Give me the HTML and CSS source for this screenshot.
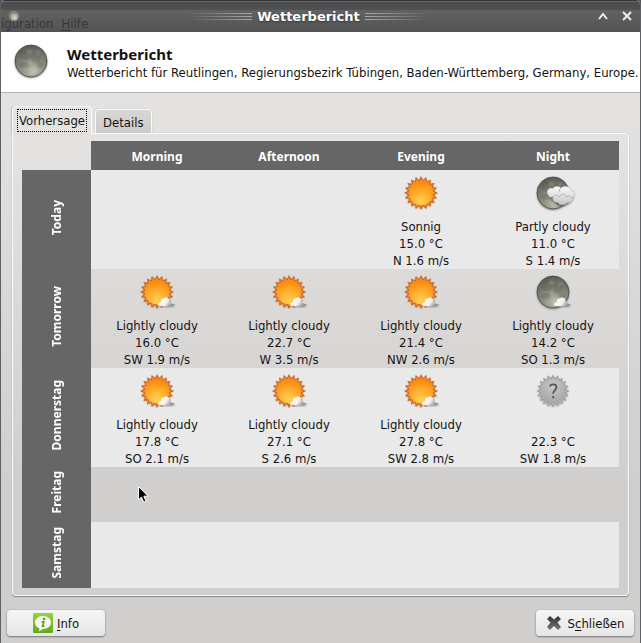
FILE: index.html
```html
<!DOCTYPE html>
<html lang="de">
<head>
<meta charset="utf-8">
<title>Wetterbericht</title>
<link rel="stylesheet" href="styles.css">
</head>
<body>
<svg class="defs" aria-hidden="true">
  <defs>
    <radialGradient id="sunFill" cx=".5" cy=".85" r=".8"><stop offset="0" stop-color="#ffd257"/><stop offset=".5" stop-color="#ffae2c"/><stop offset="1" stop-color="#fb8a10"/></radialGradient>
    <radialGradient id="moonFill" cx=".55" cy=".85" r=".9"><stop offset="0" stop-color="#bcbcae"/><stop offset=".4" stop-color="#8e8f82"/><stop offset=".75" stop-color="#6e7066"/><stop offset="1" stop-color="#50524b"/></radialGradient>
    <linearGradient id="cloudFill" x1="0" y1="0" x2="0" y2="1"><stop offset="0" stop-color="#fafafa"/><stop offset="1" stop-color="#c4c4c4"/></linearGradient>
    <linearGradient id="wispFill" x1="0" y1="0" x2="1" y2=".4"><stop offset="0" stop-color="#fff"/><stop offset=".6" stop-color="#f0f0f0"/><stop offset="1" stop-color="#888"/></linearGradient>
    <radialGradient id="greyFill" cx=".5" cy=".3" r=".7"><stop offset="0" stop-color="#c8c8c8"/><stop offset="1" stop-color="#a6a6a6"/></radialGradient>
    <filter id="soft" x="-20%" y="-20%" width="140%" height="140%"><feGaussianBlur stdDeviation="1"/></filter>
    <path id="star" d="M0-16.500 2-12.500 5.100-15.700 5.800-11.300 9.700-13.300 9-9 13.300-9.700 11.300-5.800 15.700-5.100 12.500-2 16.500 0 12.500 2 15.700 5.100 11.300 5.800 13.300 9.700 9 9 9.700 13.300 5.800 11.300 5.100 15.700 2 12.500 0 16.500-2 12.500-5.100 15.700-5.800 11.300-9.700 13.300-9 9-13.300 9.700-11.300 5.800-15.700 5.100-12.500 2-16.500 0-12.500-2-15.700-5.100-11.300-5.800-13.300-9.700-9-9-9.700-13.300-5.800-11.300-5.100-15.700-2-12.500Z"/>
  </defs>
  <symbol id="sun" viewBox="-24 -23 48 48">
    <circle r="14.5" cy="1" fill="#c86a20" opacity=".4" filter="url(#soft)"/>
    <use href="#star" fill="#c05c16" stroke="#c8641a" stroke-width=".5"/>
    <use href="#star" fill="#ee9040" transform="scale(.9)"/>
    <circle r="12.2" fill="url(#sunFill)"/>
  </symbol>
  <symbol id="moon" viewBox="-24 -23 48 48">
    <circle r="16" cy="1" fill="#333" opacity=".6" filter="url(#soft)"/>
    <circle r="16" fill="url(#moonFill)" stroke="#484a43" stroke-width=".8"/>
    <g fill="#383a34" opacity=".16"><ellipse cx="-6" cy="-6" rx="6" ry="5"/><ellipse cx="5" cy="-4" rx="5" ry="6"/><ellipse cx="-7" cy="4" rx="5" ry="3"/><circle cx="9" cy="4" r="3"/></g>
    <g fill="#d6d6c8" opacity=".25" filter="url(#soft)"><circle cx="3" cy="9" r="4"/><circle cx="-2" cy="-9" r="2"/><circle cx="-1" cy="2" r="2"/><circle cx="7" cy="-8" r="2"/></g>
  </symbol>
  <symbol id="wisp" viewBox="-24 -23 48 48">
    <path d="M2 15h16l-3-2-5-1z" fill="#444" opacity=".6" filter="url(#soft)"/>
    <path d="M1 13.500C.5 11.500 2.500 10 4 10.300 3.500 7.500 5 6 6.500 6.500 8 5 12 5 12.500 8.500 12.700 10 14 11.500 18.500 13 14 14.500 7 15 1 13.500Z" fill="url(#wispFill)"/>
  </symbol>
  <symbol id="lightSun" viewBox="-24 -23 48 48"><use href="#sun" x="-24" y="-23" width="48" height="48"/><use href="#wisp" x="-24" y="-23" width="48" height="48"/></symbol>
  <symbol id="lightMoon" viewBox="-24 -23 48 48"><use href="#moon" x="-24" y="-23" width="48" height="48"/><use href="#wisp" x="-24" y="-23" width="48" height="48"/></symbol>
  <symbol id="partMoon" viewBox="-24 -23 48 48">
    <use href="#moon" x="-24" y="-23" width="48" height="48"/>
    <path d="M-3 3C4 2 20-2 20 4 20 10 12 14 7 13 3 12-2 8-3 3Z" fill="#222" opacity=".6" filter="url(#soft)"/>
    <path d="M-5 2C-8-3-3-6 0-4.500 1-7 6-7.500 8-5 11-8 17-7 18-3 22-2 23 3 20 5 21 8 17 10.500 14.500 9.500 12 13 6 12.500 5 9.500 1 10-1 7 0 4-2 5-4 4-5 2Z" fill="url(#cloudFill)" stroke="#999" stroke-width=".5"/>
    <path d="M0 4c2-3 5-2 6 0 2-4 7-3 7 0 3-2 5 0 7 2M8-5c-2 1-2 3-1 4" fill="none" stroke="#999" stroke-width=".8" opacity=".7"/>
  </symbol>
  <symbol id="unknown" viewBox="-24 -23 48 48">
    <circle r="14.500" cy="1" fill="#777" opacity=".4" filter="url(#soft)"/>
    <use href="#star" fill="#8c8c8c"/><use href="#star" fill="#b2b2b2" transform="scale(.93)"/>
    <circle r="12.200" fill="url(#greyFill)"/>
    <path d="M-3-4.500C-2.500-7.500 3.500-7.500 3.500-3.800 3.500-1 .2-.8.200 2.800M.200 5v2.200" fill="none" stroke="#555" stroke-width="1.800"/>
  </symbol>
</svg>
<div class="window">
  <header class="titlebar">
    <div class="ghost" aria-hidden="true"><span>iguration</span><span><u>H</u>ilfe</span></div>
    <svg class="mini" viewBox="-18 -18 36 36"><circle r="16" fill="#84857b"/><circle cx="1" cy="3" r="10" fill="#b9b9aa"/><circle cx="2" cy="5" r="5" fill="#d0d0c2"/></svg>
    <span class="lines"></span><h1>Wetterbericht</h1><span class="lines right"></span>
    <div class="controls">
      <button aria-label="Einrollen"><svg viewBox="0 0 12 12"><path d="M2 9 6 4l4 5"/></svg></button>
      <button aria-label="Fenster schließen"><svg viewBox="0 0 12 12"><path d="m2 2 8 8M10 2l-8 8"/></svg></button>
    </div>
  </header>
  <section class="banner">
    <svg class="icon" viewBox="0 0 48 48"><use href="#moon"/></svg>
    <div><h2>Wetterbericht</h2><p>Wetterbericht für Reutlingen, Regierungsbezirk Tübingen, Baden-Württemberg, Germany, Europe.</p></div>
  </section>
  <main>
    <div class="tabs" role="tablist">
      <button class="tab active" role="tab" aria-selected="true"><span>Vorhersage</span></button>
      <button class="tab" role="tab" aria-selected="false"><span>Details</span></button>
    </div>
    <div class="panel">
      <table>
        <colgroup><col class="days"><col><col><col><col></colgroup>
        <thead><tr><td></td><th scope="col">Morning</th><th scope="col">Afternoon</th><th scope="col">Evening</th><th scope="col">Night</th></tr></thead>
        <tbody>
          <tr><th scope="row"><span>Today</span></th><td></td><td></td>
            <td><svg class="icon"><use href="#sun"/></svg><p>Sonnig</p><p>15.0 °C</p><p>N 1.6 m/s</p></td>
            <td><svg class="icon"><use href="#partMoon"/></svg><p>Partly cloudy</p><p>11.0 °C</p><p>S 1.4 m/s</p></td></tr>
          <tr><th scope="row"><span>Tomorrow</span></th>
            <td><svg class="icon"><use href="#lightSun"/></svg><p>Lightly cloudy</p><p>16.0 °C</p><p>SW 1.9 m/s</p></td>
            <td><svg class="icon"><use href="#lightSun"/></svg><p>Lightly cloudy</p><p>22.7 °C</p><p>W 3.5 m/s</p></td>
            <td><svg class="icon"><use href="#lightSun"/></svg><p>Lightly cloudy</p><p>21.4 °C</p><p>NW 2.6 m/s</p></td>
            <td><svg class="icon"><use href="#lightMoon"/></svg><p>Lightly cloudy</p><p>14.2 °C</p><p>SO 1.3 m/s</p></td></tr>
          <tr><th scope="row"><span>Donnerstag</span></th>
            <td><svg class="icon"><use href="#lightSun"/></svg><p>Lightly cloudy</p><p>17.8 °C</p><p>SO 2.1 m/s</p></td>
            <td><svg class="icon"><use href="#lightSun"/></svg><p>Lightly cloudy</p><p>27.1 °C</p><p>S 2.6 m/s</p></td>
            <td><svg class="icon"><use href="#lightSun"/></svg><p>Lightly cloudy</p><p>27.8 °C</p><p>SW 2.8 m/s</p></td>
            <td><svg class="icon"><use href="#unknown"/></svg><p></p><p>22.3 °C</p><p>SW 1.8 m/s</p></td></tr>
          <tr class="short"><th scope="row"><span>Freitag</span></th><td class="pointed"><svg class="cursor" viewBox="0 0 12 18"><path d="M.5.500v13.500l3-3 2.200 5.200 2.300-1-2.200-5h4.200z" fill="#000" stroke="#fff"/></svg></td><td></td><td></td><td></td></tr>
          <tr class="last"><th scope="row"><span>Samstag</span></th><td></td><td></td><td></td><td></td></tr>
        </tbody>
      </table>
    </div>
  </main>
  <footer>
    <button class="action"><svg class="info" viewBox="0 0 20 20"><defs><linearGradient id="green" x1="0" y1="0" x2="0" y2="1"><stop offset="0" stop-color="#93d63c"/><stop offset="1" stop-color="#63a81c"/></linearGradient></defs><rect width="20" height="20" rx="1" fill="url(#green)"/><path d="M10 3C5 3 2 6 2 9.500c0 3 2 5 4.500 5.800L5.800 18.500 10 16c5 0 8-3 8-6.500S15 3 10 3Z" fill="#f6f6f6"/><circle cx="11" cy="6" r="1.300" fill="#55a01a"/><path d="M8.500 8.800h2.300l-1.200 4.400h1.800" fill="none" stroke="#55a01a" stroke-width="1.600"/></svg><span><u>I</u>nfo</span></button>
    <button class="action close"><svg class="cross" viewBox="0 0 16 16"><defs><linearGradient id="dark" x1="0" y1="0" x2="0" y2="1"><stop offset="0" stop-color="#333"/><stop offset="1" stop-color="#777"/></linearGradient></defs><path d="M4 1 8 4.500 12 1 15 4 11.500 7.500 15 12 12 15 8 11 4 15 1 12 4.500 7.500 1 4Z" fill="url(#dark)"/></svg><span>S<u>c</u>hließen</span></button>
  </footer>
</div>
</body>
</html>
```
FILE: styles.css
```css
* { box-sizing: border-box; }
body { margin: 0; font-family: "DejaVu Sans Condensed", sans-serif; font-size: 13px; line-height: 17px; color: #141312; background: #55565a; }
h1, h2, p { margin: 0; }
button { font: inherit; color: inherit; border: 0; padding: 0; background: none; }
u { text-underline-offset: 2px; }
.defs { position: absolute; width: 0; height: 0; }
.window { display: flex; flex-direction: column; min-height: 100vh; border: solid #5f6062; border-width: 0 1px 1px; background: linear-gradient(#e4e3e2 90px, #d0cfcd 480px); border-radius: 5px 5px 0 0; overflow: hidden; }
.titlebar { position: relative; display: flex; align-items: center; justify-content: center; gap: 5px; height: 32px; padding-right: 24px; background: linear-gradient(#333436 0 1px, #68696b 1px 2px, #4b4c4e 2px, #505153 10px, #626262 10px, #535353); }
.titlebar h1 { font: bold 13px/17px "DejaVu Sans", sans-serif; color: #fff; text-shadow: 0 1px 2px #333; }
.lines { width: 64px; height: 7px; background: repeating-linear-gradient(#aaa 0 1px, transparent 1px 3px); mask-image: linear-gradient(to right, transparent, #000); }
.lines.right { mask-image: linear-gradient(to left, transparent, #000); }
.mini { position: absolute; left: 7px; top: 10px; width: 12px; height: 12px; }
.ghost { position: absolute; left: 0; top: 15px; display: flex; gap: 8px; color: #373737; }
.controls { position: absolute; right: 7px; top: 10px; display: flex; gap: 12px; }
.controls svg { display: block; width: 12px; height: 12px; fill: none; stroke: #eee; stroke-width: 2; }
.banner { display: flex; align-items: center; gap: 12px; height: 61px; padding: 0 0 0 6px; background: #fff; border-bottom: 1px solid #b2b1b0; white-space: nowrap; }
.banner .icon { flex: none; margin: 0; }
.banner h2 { font: bold 15px/20px "Noto Sans", sans-serif; }
.icon { display: block; width: 48px; height: 48px; margin: 0 auto; }
main { flex: 1; display: flex; flex-direction: column; padding: 13px 11px 0; }
.tabs { display: flex; align-items: flex-end; gap: 3px; }
.tab { height: 24px; padding: 1px 7px 0; border: solid #fafafa; border-width: 1px 1px 0; border-radius: 4px 4px 0 0; background: linear-gradient(#d8d7d6, #cccbca); box-shadow: 0 0 1px #888; }
.tab.active { position: relative; height: 28px; margin-bottom: -1px; padding: 0 5px; background: #e4e3e2; box-shadow: -1px 0 1px #bbb; }
.tab.active span { display: block; padding: 2px 1px; outline: 1px dotted #000; }
.panel { flex: 1; padding: 7px 9px; border: 1px solid #fafafa; border-radius: 0 4px 4px 4px; background: linear-gradient(#e4e3e2, #d0cfcd 340px); box-shadow: 0 1px 1px #888, 0 0 1px #aaa; }
table { width: 100%; border-collapse: collapse; table-layout: fixed; text-align: center; }
.days { width: 69px; }
th, td { padding: 0; }
thead th { height: 29px; padding-top: 1px; }
th { background: #666; color: #fff; font: bold 12px/17px "Noto Sans", sans-serif; }
td { vertical-align: top; }
tbody tr { height: 99px; }
tbody .short { height: 55px; }
tbody .last { height: 66px; }
tbody tr:nth-child(odd) td { background: #e9e9e9; }
td p { min-height: 17px; }
tbody th span { writing-mode: vertical-rl; transform: rotate(180deg); }
.pointed { position: relative; }
.cursor { position: absolute; left: 47px; top: 19px; width: 12px; height: 18px; }
footer { display: flex; justify-content: space-between; padding: 14px 6px 7px; }
.action { display: flex; align-items: center; justify-content: center; gap: 4px; min-width: 98px; height: 26px; border-radius: 4px; background: linear-gradient(#f5f5f5, #e6e6e6); box-shadow: 0 1px 2px #777, 0 0 1px #888; }
.info { width: 20px; height: 20px; }
.cross { width: 16px; height: 16px; margin-right: 2px; }
```
